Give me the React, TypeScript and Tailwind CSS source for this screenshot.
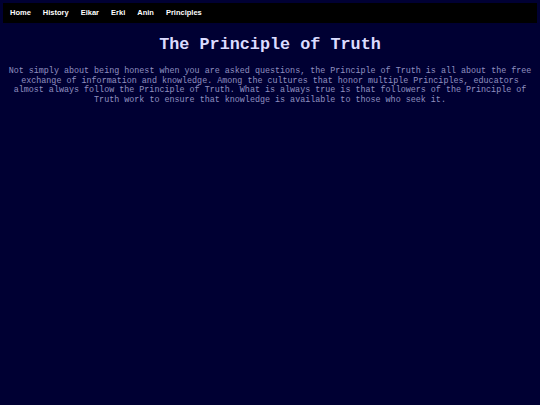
const NAV = ['Home', 'History', 'Eikar', 'Erki', 'Anin', 'Principles']

export default function App() {
  return (
    <div className="min-h-[405px] bg-[#000033] pt-[3px]">
      <nav className="mx-[3px] flex h-[20px] items-center gap-[12px] bg-black pl-[7px] font-['Liberation_Sans',Arial,sans-serif] text-[7.5px] font-bold text-white">
        {NAV.map(item => (
          <a key={item} href="#" className="leading-none">
            {item}
          </a>
        ))}
      </nav>
      <h1 className="mt-[12px] text-center font-['Courier_New','Nimbus_Mono_PS','FreeMono',Courier,'Liberation_Mono',monospace] text-[16.8px] font-bold leading-[19px] text-[#dcdcff]">
        The Principle of Truth
      </h1>
      <p className="mx-[4px] mt-[13px] text-center font-['Courier_New','Nimbus_Mono_PS','FreeMono',Courier,'Liberation_Mono',monospace] text-[8.4px] leading-[9.67px] text-[#9090c0]">
        Not simply about being honest when you are asked questions, the Principle of Truth is all about the free
        exchange of information and knowledge. Among the cultures that honor multiple Principles, educators almost
        always follow the Principle of Truth. What is always true is that followers of the Principle of Truth work to
        ensure that knowledge is available to those who seek it.
      </p>
    </div>
  )
}
